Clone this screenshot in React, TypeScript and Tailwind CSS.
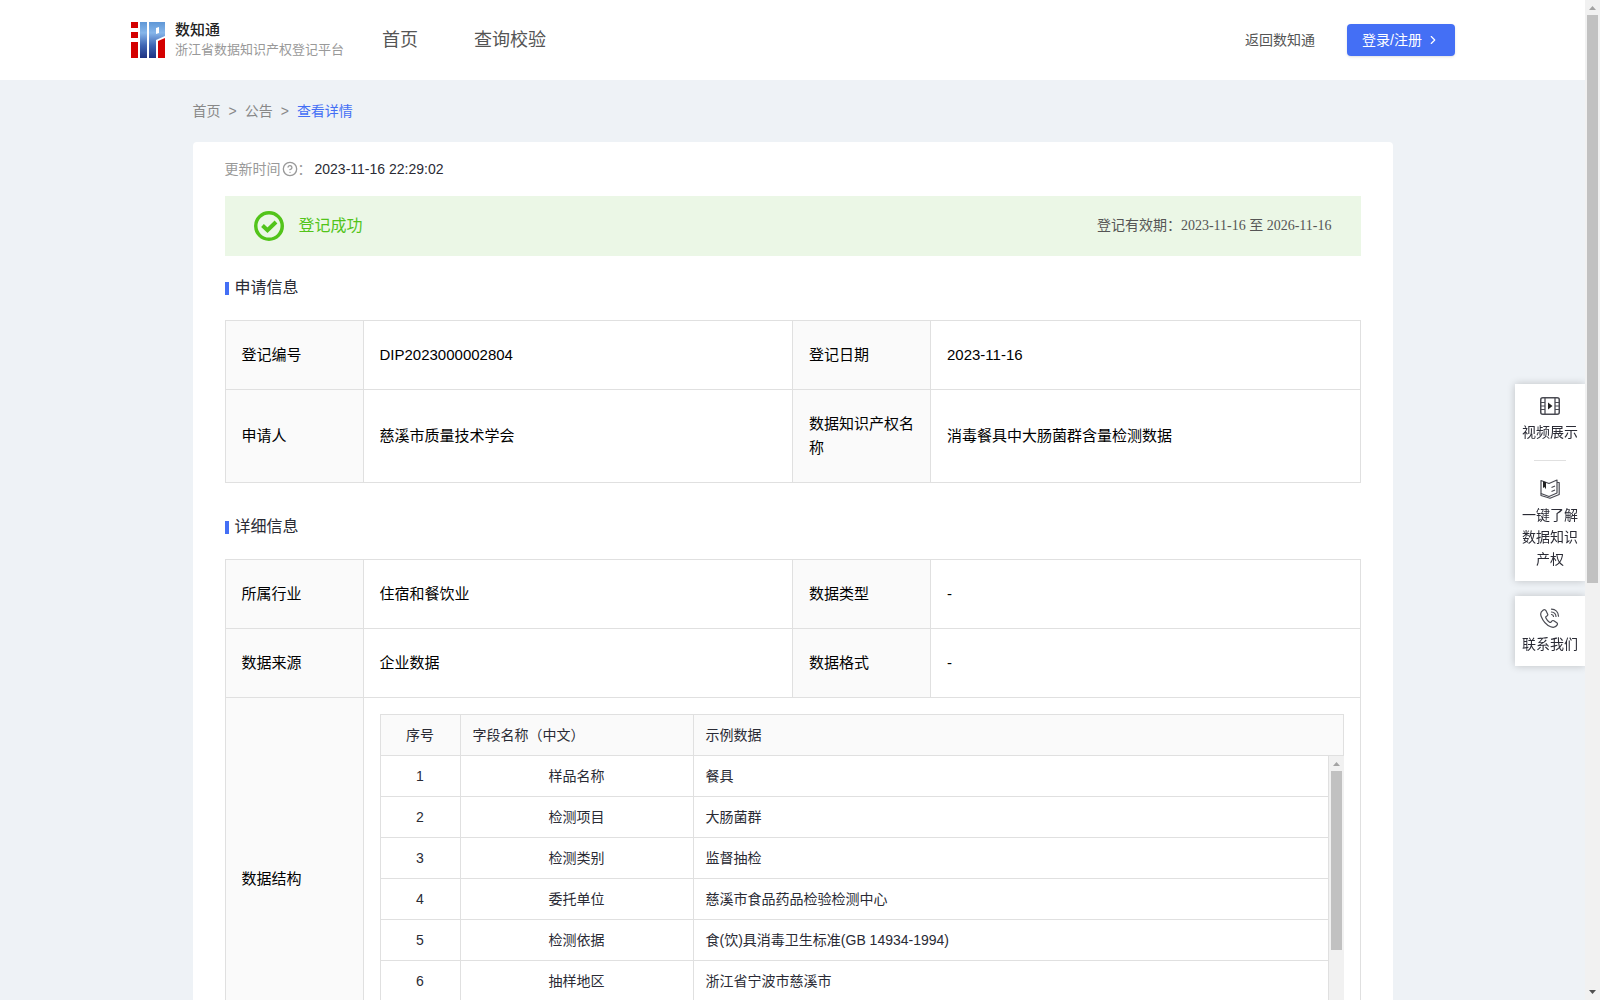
import type { ReactNode } from 'react'
import { ChevronRight, CircleHelp } from 'lucide-react'

interface Field {
  index: number
  name: string
  sample: string
}

const fields: Field[] = [
  { index: 1, name: '样品名称', sample: '餐具' },
  { index: 2, name: '检测项目', sample: '大肠菌群' },
  { index: 3, name: '检测类别', sample: '监督抽检' },
  { index: 4, name: '委托单位', sample: '慈溪市食品药品检验检测中心' },
  { index: 5, name: '检测依据', sample: '食(饮)具消毒卫生标准(GB 14934-1994)' },
  { index: 6, name: '抽样地区', sample: '浙江省宁波市慈溪市' },
]

const Logo = () => (
  <svg width="34" height="36" viewBox="0 0 34 36" aria-hidden="true">
    <defs>
      <linearGradient id="logoBlue" gradientUnits="userSpaceOnUse" x1="0" y1="0" x2="0" y2="36">
        <stop offset="0" stopColor="#5f97d6" />
        <stop offset="0.3" stopColor="#86b6ea" />
        <stop offset="0.65" stopColor="#3f66b4" />
        <stop offset="1" stopColor="#1e3282" />
      </linearGradient>
    </defs>
    <path fill="#d40000" d="M0 0h7v6H0zM0 10h7v6H0zM0 20h7v16H0zM27 19l7-3v20h-7z" />
    <path fill="url(#logoBlue)" d="M9 0h7v36H9z" />
    <path fill="url(#logoBlue)" fillRule="evenodd" d="M18 0h16v14l-9 4v18h-7zM25 6v6l3-1V5z" />
  </svg>
)

const VideoIcon = () => (
  <svg width="20" height="20" viewBox="0 0 20 20" fill="none" stroke="#4a4b53" aria-hidden="true">
    <rect x="0.75" y="1.75" width="18.500" height="16.500" rx="2" strokeWidth="1.500" />
    <path d="M5 1.500v17M15 1.500v17" strokeWidth="1.300" />
    <path d="M.5 6.500H5M.5 10H5M.5 13.500H5M15 6.500h4.500M15 10h4.500M15 13.500h4.500" />
    <path d="M8 6.500v7l4.500-3.500z" fill="#222" stroke="none" />
  </svg>
)

const BookIcon = () => (
  <svg width="20" height="20" viewBox="0 0 20 20" fill="none" stroke="#4a4b53" strokeWidth="1.200" strokeLinejoin="round" aria-hidden="true">
    <path d="M1 1.500 9 4.500 17 1v13L9 17.500 1 14.500z" />
    <path d="M17 3.500h2.200v12L10 19.300 1 16.500v-2M11.500 8.500l3.500-1.500M11.500 12.500l3.500-1.500" />
    <path d="M3 2.200 6 3.200v7L4.500 8 3 9z" fill="#222" stroke="none" />
  </svg>
)

const PhoneIcon = () => (
  <svg width="20" height="20" viewBox="0 0 20 20" fill="none" stroke="#4a4b53" strokeWidth="1.200" strokeLinecap="round" strokeLinejoin="round" aria-hidden="true">
    <path d="M3 2.200C1 3.500.2 6 1.200 8.500c2 5 5 8.500 9.500 10.300 2.600 1 5.300.2 6.500-1.900.5-.9.300-1.600-.4-2.100l-3-2c-.8-.5-1.500-.3-2 .3l-.8 1c-.4.500-.9.500-1.500.1-1.700-1.100-2.800-2.500-3.600-4.200-.3-.6-.2-1.100.3-1.500l1-.7c.6-.5.8-1.100.4-1.900l-1.700-3.300C5.300 1.600 4.200 1.400 3 2.200z" />
    <path d="M11.500 1.200c4 .1 6.800 3 7 7M11.500 4c2.600.2 4.300 2 4.500 4.500M11.500 6.500c1.200.1 1.900.8 2 2" />
  </svg>
)

const CheckIcon = () => (
  <svg width="30" height="30" viewBox="0 0 30 30" fill="none" stroke="#52c41a" aria-hidden="true">
    <circle cx="15" cy="15" r="13.250" strokeWidth="3.500" />
    <path d="M8.500 14.500l5 4.700 8.500-8.200" strokeWidth="4" />
  </svg>
)

const Arrow = ({ down = false, color }: { down?: boolean; color: string }) => (
  <svg width="15" height="15" viewBox="0 0 15 15" fill={color} className="shrink-0" aria-hidden="true">
    {down ? <path d="M4 5h7l-3.500 4z" /> : <path d="M4 10h7L7.500 6z" />}
  </svg>
)

const SectionTitle = ({ children }: { children: ReactNode }) => (
  <h2 className="flex h-6 items-center gap-[6px] mb-5 text-base leading-6 text-[#2a2b35]">
    <span className="mt-px h-[13px] w-1 bg-[#446ff5]" />
    {children}
  </h2>
)

const Label = ({ children }: { children: ReactNode }) => (
  <th scope="row" className="border border-[#e0e0e0] bg-[#fafafa] px-4 py-[22px] text-left font-normal">
    {children}
  </th>
)

const Value = ({ children }: { children: ReactNode }) => (
  <td className="border border-[#e0e0e0] px-4 py-[22px]">{children}</td>
)

const InfoTable = ({ children }: { children: ReactNode }) => (
  <table className="w-full table-fixed border-collapse text-[15px] leading-6 text-black">
    <colgroup>
      <col className="w-[138px]" />
      <col />
      <col className="w-[138px]" />
      <col />
    </colgroup>
    <tbody>{children}</tbody>
  </table>
)

const FieldTable = () => (
  <div className="text-sm leading-5 text-[#2a2b35]">
    <table className="w-full table-fixed border-collapse">
      <thead>
        <tr className="h-[41px] bg-[#fafafa]">
          <th className="w-20 border border-[#e0e0e0] font-normal">序号</th>
          <th className="w-[233px] border border-[#e0e0e0] px-3 text-left font-normal">字段名称（中文）</th>
          <th className="border border-[#e0e0e0] px-3 text-left font-normal">示例数据</th>
        </tr>
      </thead>
    </table>
    <div className="flex h-[287px] overflow-hidden">
      <div className="min-w-0 flex-1">
        <table className="w-full table-fixed border-collapse">
          <tbody>
            {fields.map((field) => (
              <tr key={field.index} className="h-[41px] first:h-10">
                <td className="w-20 border border-t-0 border-[#e0e0e0] text-center">{field.index}</td>
                <td className="w-[233px] border border-t-0 border-[#e0e0e0] px-3 text-center">{field.name}</td>
                <td className="border border-t-0 border-[#e0e0e0] px-3">{field.sample}</td>
              </tr>
            ))}
          </tbody>
        </table>
      </div>
      <div className="flex w-[15px] flex-col items-center bg-[#f1f1f1]">
        <Arrow color="#a3a3a3" />
        <div className="h-[179px] w-[11px] bg-[#c1c1c1]" />
      </div>
    </div>
  </div>
)

const SideItem = ({ icon, children }: { icon: ReactNode; children: ReactNode }) => (
  <a href="#" className="flex flex-col items-center gap-[5px] px-[7px] pt-3 pb-[11px] text-center text-sm leading-[22px] text-[#2a2b35]">
    {icon}
    <span>{children}</span>
  </a>
)

const App = () => {
  return (
    <div className="flex h-screen overflow-hidden bg-[#eef2f6] font-['Liberation_Sans','Noto_Sans_CJK_SC',sans-serif]">
      <div className="min-w-0 flex-1 overflow-hidden">
        <header className="flex h-20 items-center bg-white pr-[130px] pl-[131px]">
          <a href="#" className="flex w-[251px] items-center gap-[10px]">
            <Logo />
            <span className="flex flex-col whitespace-nowrap">
              <span className="text-[15px] leading-5 font-medium text-[#222]">数知通</span>
              <span className="text-[13px] leading-5 text-[#999]">浙江省数据知识产权登记平台</span>
            </span>
          </a>
          <nav className="flex gap-14 text-lg text-[#555]">
            <a href="#">首页</a>
            <a href="#">查询校验</a>
          </nav>
          <div className="ml-auto flex items-center gap-8 text-sm">
            <a href="#" className="text-[#555]">返回数知通</a>
            <button className="flex h-8 w-[108px] items-center justify-center gap-1 rounded-sm bg-[#446ff5] text-white shadow-sm">
              登录/注册
              <ChevronRight size={14} />
            </button>
          </div>
        </header>

        <main className="mx-auto max-w-[1200px]">
          <nav className="flex gap-2 py-5 text-sm leading-[22px] text-[#888]">
            <a href="#">首页</a>
            <span>&gt;</span>
            <a href="#">公告</a>
            <span>&gt;</span>
            <a href="#" className="text-[#446ff5]">查看详情</a>
          </nav>

          <div className="rounded-sm bg-white px-8 pt-4">
            <p className="flex items-center text-sm leading-[22px] text-[#999]">
              更新时间
              <CircleHelp size={16} className="ml-px" />
              ：
              <time className="ml-[3px] text-[#2a2b35]">2023-11-16 22:29:02</time>
            </p>

            <div className="mt-4 mb-5 flex h-[60px] items-center bg-[#ebf7e6] pr-[29px] pl-[29px]">
              <CheckIcon />
              <span className="ml-[15px] text-base text-[#52c41a]">登记成功</span>
              <span className="ml-auto font-['Liberation_Serif','Noto_Sans_CJK_SC',serif] text-sm text-[#555]">
                登记有效期：2023-11-16 至 2026-11-16
              </span>
            </div>

            <section className="mb-8">
              <SectionTitle>申请信息</SectionTitle>
              <InfoTable>
                <tr>
                  <Label>登记编号</Label>
                  <Value>DIP2023000002804</Value>
                  <Label>登记日期</Label>
                  <Value>2023-11-16</Value>
                </tr>
                <tr>
                  <Label>申请人</Label>
                  <Value>慈溪市质量技术学会</Value>
                  <Label>数据知识产权名称</Label>
                  <Value>消毒餐具中大肠菌群含量检测数据</Value>
                </tr>
              </InfoTable>
            </section>

            <section>
              <SectionTitle>详细信息</SectionTitle>
              <InfoTable>
                <tr>
                  <Label>所属行业</Label>
                  <Value>住宿和餐饮业</Value>
                  <Label>数据类型</Label>
                  <Value>-</Value>
                </tr>
                <tr>
                  <Label>数据来源</Label>
                  <Value>企业数据</Value>
                  <Label>数据格式</Label>
                  <Value>-</Value>
                </tr>
                <tr>
                  <Label>数据结构</Label>
                  <td colSpan={3} className="border border-[#e0e0e0] p-4">
                    <FieldTable />
                  </td>
                </tr>
              </InfoTable>
            </section>
          </div>
        </main>
      </div>

      <aside className="fixed top-96 right-[15px] flex w-[70px] flex-col gap-[15px]">
        <div className="bg-white shadow-[0_0_8px_rgba(0,0,0,0.2)]">
          <SideItem icon={<VideoIcon />}>视频展示</SideItem>
          <hr className="mx-auto my-[6px] w-8 border-[#e0e0e0]" />
          <SideItem icon={<BookIcon />}>一键了解数据知识产权</SideItem>
        </div>
        <div className="bg-white shadow-[0_0_8px_rgba(0,0,0,0.2)]">
          <SideItem icon={<PhoneIcon />}>联系我们</SideItem>
        </div>
      </aside>

      <div className="z-10 flex w-[15px] shrink-0 flex-col items-center bg-[#f1f1f1]">
        <Arrow color="#a3a3a3" />
        <div className="h-[568px] w-[11px] bg-[#c1c1c1]" />
        <div className="mt-auto flex">
          <Arrow down color="#505050" />
        </div>
      </div>
    </div>
  )
}

export default App
